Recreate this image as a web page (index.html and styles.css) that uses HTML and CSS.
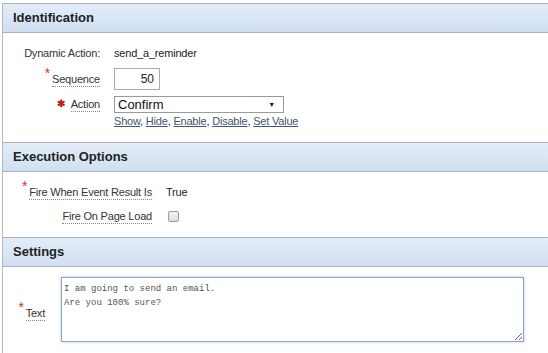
FILE: index.html
```html
<!DOCTYPE html>
<html lang="en">
<head>
  <meta charset="UTF-8">
  <title>Dynamic Action</title>
  <link rel="stylesheet" href="styles.css">
</head>
<body>
  <div class="frame">
    <div class="region">
      <div class="region-head">Identification</div>
      <div class="region-body ident">
        <div class="row">
          <span class="label plain">Dynamic Action:</span>
          <span class="value">send_a_reminder</span>
        </div>
        <div class="row">
          <span class="label"><span class="req">*</span><span class="help">Sequence</span></span>
          <input class="num" type="text" value="50">
        </div>
        <div class="row">
          <span class="label"><span class="req-big">&#10033;</span><span class="help">Action</span></span>
          <span class="select-wrap">
            <select class="select">
              <option>Confirm</option>
            </select>
            <span class="arrow">&#9660;</span>
          </span>
        </div>
        <div class="row links">
          <span class="label"></span>
          <span class="value"><a href="#">Show</a>, <a href="#">Hide</a>, <a href="#">Enable</a>, <a href="#">Disable</a>, <a href="#">Set Value</a></span>
        </div>
      </div>
    </div>

    <div class="region">
      <div class="region-head">Execution Options</div>
      <div class="region-body exec">
        <div class="row">
          <span class="label"><span class="req">*</span><span class="help">Fire When Event Result Is</span></span>
          <span class="value">True</span>
        </div>
        <div class="row">
          <span class="label"><span class="help">Fire On Page Load</span></span>
          <span class="value"><span class="check"></span></span>
        </div>
      </div>
    </div>

    <div class="region">
      <div class="region-head">Settings</div>
      <div class="region-body settings">
        <div class="row">
          <span class="label"><span class="req">*</span><span class="help">Text</span></span>
          <textarea class="text">I am going to send an email.
Are you 100% sure?</textarea>
        </div>
      </div>
    </div>
  </div>
</body>
</html>
```

FILE: styles.css
```css
body {
  margin: 0;
  background: #fff;
  font-family: 'Liberation Sans', Arial, sans-serif;
  font-size: 11px;
  letter-spacing: -0.2px;
  color: #333;
}
.frame {
  margin: 3px 0 0 2px;
  border-left: 1px solid #b4b8bf;
  height: 350px;
  overflow: hidden;
}
.region-head {
  height: 28px;
  line-height: 28px;
  padding-left: 10px;
  border-top: 1px solid #a9b3c0;
  border-bottom: 1px solid #a9b3c0;
  background: linear-gradient(#e3edf9, #d0dff0);
  font-size: 13px;
  font-weight: bold;
  letter-spacing: 0;
  color: #222;
}
.region-body {
  display: flex;
  flex-direction: column;
}
.row {
  display: flex;
  align-items: center;
}
.label {
  flex: none;
  text-align: right;
  color: #333;
}
.value {
  color: #222;
}
.help {
  border-bottom: 1px dotted #888;
  padding-bottom: 1px;
}
.req {
  color: #e0301e;
  font-size: 14px;
  vertical-align: 5px;
  margin-right: 2px;
  line-height: 0;
}
.req-big {
  color: #c3181c;
  font-size: 10px;
  font-weight: bold;
  margin-right: 6px;
  vertical-align: 1px;
}

/* identification */
.ident {
  padding: 10px 0 13px 0;
}
.ident .label {
  width: 97px;
  margin-right: 14px;
}
.ident .row:nth-child(1) { height: 20px; }
.ident .row:nth-child(2) { height: 24px; margin-top: 4px; }
.ident .row:nth-child(3) { height: 18px; margin-top: 4px; }
.ident .row.links { height: 16px; margin-top: 0; }
.num {
  width: 46px;
  height: 22px;
  box-sizing: border-box;
  border: 1px solid #aaa;
  padding: 0 5px;
  text-align: right;
  font-family: inherit;
  font-size: 12px;
  color: #222;
}
.select-wrap {
  position: relative;
  display: inline-block;
}
.select {
  appearance: none;
  width: 170px;
  height: 17px;
  border: 1px solid #9a9a9a;
  border-radius: 0;
  background: #fff;
  padding: 0 0 0 3px;
  font-family: inherit;
  font-size: 13px;
  line-height: 15px;
  color: #111;
}
.arrow {
  position: absolute;
  right: 9px;
  top: 5px;
  font-size: 7px;
  color: #222;
  pointer-events: none;
}
.links a {
  color: #46546a;
}

/* execution options */
.exec {
  padding: 10px 0 11px 0;
}
.exec .label {
  width: 149px;
  margin-right: 14px;
}
.exec .row { height: 20px; }
.exec .row + .row { margin-top: 4px; }
.check {
  display: inline-block;
  width: 9px;
  height: 9px;
  margin-left: 2px;
  margin-top: 3px;
  border: 1px solid #9c9c9c;
  border-radius: 2px;
  background: linear-gradient(#f4f4f4, #dcdcdc);
}

/* settings */
.settings {
  padding: 10px 0 10px 0;
}
.settings .label {
  width: 42px;
  margin-right: 16px;
  padding-top: 6px;
}
.text {
  width: 463px;
  height: 65px;
  box-sizing: border-box;
  border: 1px solid #8da5c6;
  box-shadow: 0 0 3px rgba(120, 150, 200, 0.5);
  padding: 4px 2px;
  font-family: 'Liberation Mono', 'DejaVu Sans Mono', monospace;
  font-size: 9px;
  letter-spacing: 0;
  line-height: 14px;
  color: #555;
  outline: none;
}
```
